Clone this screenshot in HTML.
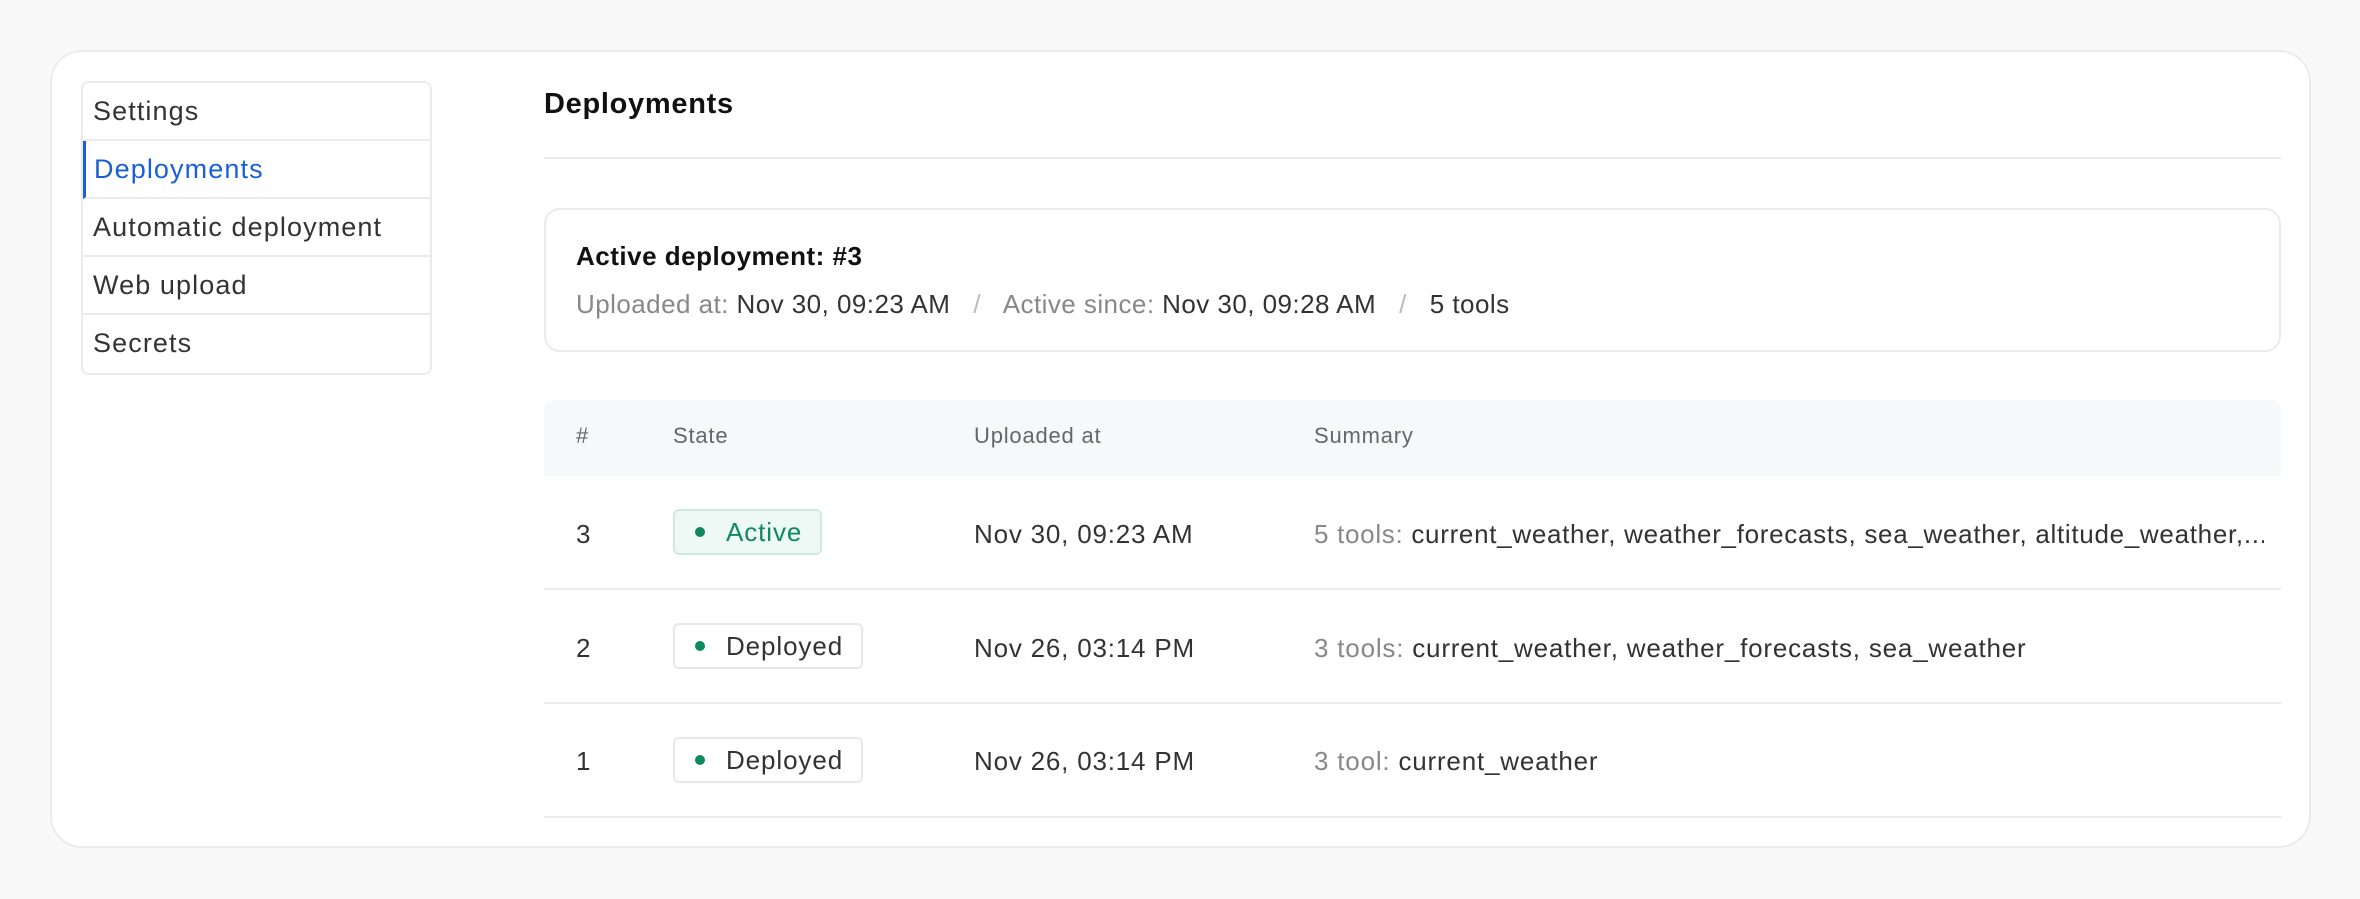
<!DOCTYPE html>
<html><head><meta charset="utf-8"><style>
*{box-sizing:border-box;margin:0;padding:0}
body{width:2360px;height:899px;background:#f9f9f9;font-family:"Liberation Sans",sans-serif;color:#333;position:relative;overflow:hidden}
.card{position:absolute;left:50px;top:50px;width:2261px;height:798px;background:#fff;border:2px solid #ebebeb;border-radius:32px}
.side{position:absolute;left:81px;top:81px;width:351px;border:2px solid #ebebeb;border-radius:8px;background:#fff;overflow:hidden}
.side div{height:58px;line-height:56px;padding-left:10px;font-size:27px;color:#333;border-bottom:2px solid #ebebeb;letter-spacing:1.1px}
.side div:last-child{border-bottom:none}
.side .on{color:#1b5fd8;border-left:3px solid #1b5fd8;padding-left:8px}
.abs{position:absolute;white-space:nowrap}
h1{position:absolute;left:544px;top:88px;font-size:29px;font-weight:bold;color:#111;letter-spacing:0.7px}
.hr{position:absolute;left:544px;top:157px;width:1737px;height:2px;background:#ebebeb}
.act{position:absolute;left:544px;top:208px;width:1737px;height:144px;border:2px solid #ebebeb;border-radius:16px}
.g{color:#888}
.th{position:absolute;left:544px;top:400px;width:1737px;height:76px;background:#f7f8fa;border-radius:10px 10px 0 0}
.rowline{position:absolute;left:544px;width:1737px;height:2px;background:#ebebeb}
.t{font-size:26px;color:#333;letter-spacing:0.8px}
.hd{font-size:22px;color:#666;top:423px;letter-spacing:0.8px}
.badge{position:absolute;left:673px;height:46px;border:2px solid #e8e8e8;border-radius:6px;background:#fff;font-size:26px;line-height:42px;padding-left:51px;color:#333;letter-spacing:0.9px}
.badge:before{content:"";position:absolute;left:20px;top:16px;width:10px;height:10px;border-radius:50%;background:#0d8a5e}
.badge.a{background:#eef8f4;border-color:#cfeadd;color:#0d8a5e}
</style></head><body>
<div class="card"></div>
<div class="side">
<div>Settings</div>
<div class="on">Deployments</div>
<div>Automatic deployment</div>
<div>Web upload</div>
<div>Secrets</div>
</div>
<h1>Deployments</h1>
<div class="hr"></div>
<div class="act"></div>
<div class="abs" style="left:576px;top:241px;font-size:26px;font-weight:bold;color:#111;letter-spacing:0.5px">Active deployment: #3</div>
<div class="abs t" style="left:576px;top:289px;letter-spacing:0.45px"><span class="g">Uploaded at:</span> Nov 30, 09:23 AM &nbsp;<span style="color:#bbb"> / </span>&nbsp; <span class="g">Active since:</span> Nov 30, 09:28 AM &nbsp;<span style="color:#bbb"> / </span>&nbsp; 5 tools</div>
<div class="th"></div>
<div class="abs hd" style="left:576px">#</div>
<div class="abs hd" style="left:673px">State</div>
<div class="abs hd" style="left:974px">Uploaded at</div>
<div class="abs hd" style="left:1314px">Summary</div>

<div class="abs t" style="left:576px;top:519px">3</div>
<div class="badge a" style="top:509px;width:149px">Active</div>
<div class="abs t" style="left:974px;top:519px">Nov 30, 09:23 AM</div>
<div class="abs t" style="left:1314px;top:519px;width:950px;overflow:hidden;letter-spacing:0.7px"><span class="g">5 tools:</span> current_weather, weather_forecasts, sea_weather, altitude_weather,...</div>
<div class="rowline" style="top:588px"></div>

<div class="abs t" style="left:576px;top:633px">2</div>
<div class="badge" style="top:623px;width:190px">Deployed</div>
<div class="abs t" style="left:974px;top:633px">Nov 26, 03:14 PM</div>
<div class="abs t" style="left:1314px;top:633px"><span class="g">3 tools:</span> current_weather, weather_forecasts, sea_weather</div>
<div class="rowline" style="top:702px"></div>

<div class="abs t" style="left:576px;top:746px">1</div>
<div class="badge" style="top:737px;width:190px">Deployed</div>
<div class="abs t" style="left:974px;top:746px">Nov 26, 03:14 PM</div>
<div class="abs t" style="left:1314px;top:746px"><span class="g">3 tool:</span> current_weather</div>
<div class="rowline" style="top:816px"></div>
</body></html>
